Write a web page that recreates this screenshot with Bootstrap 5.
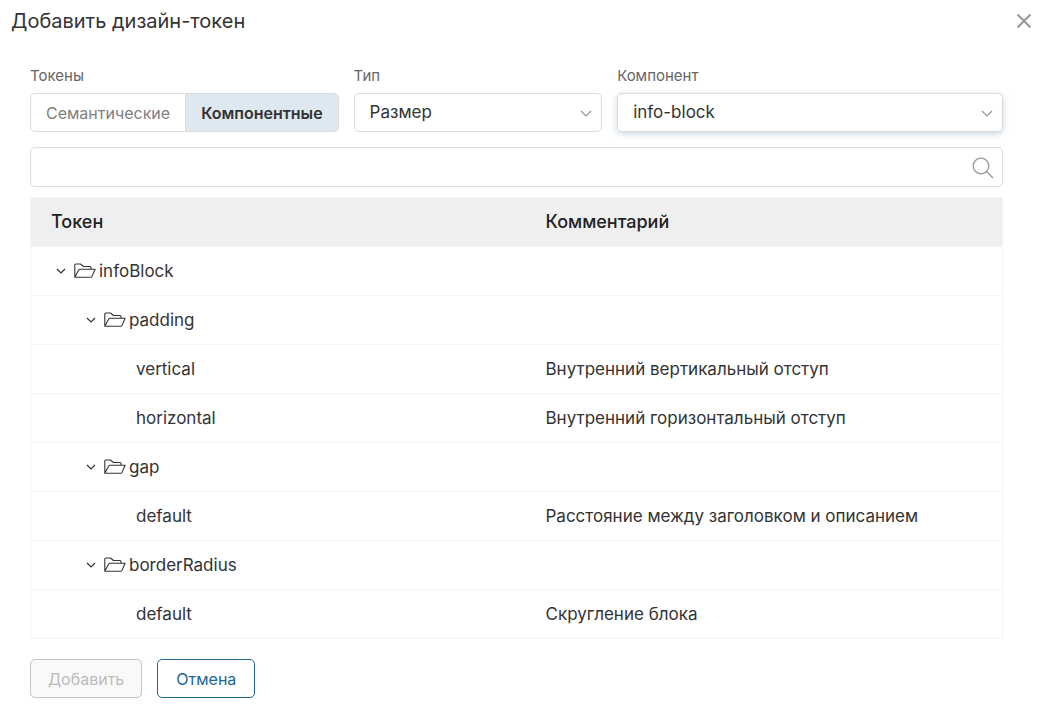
<!DOCTYPE html>
<html lang="ru">
<head>
<meta charset="utf-8">
<meta name="viewport" content="width=device-width, initial-scale=1">
<title>Добавить дизайн-токен</title>
<link href="https://cdn.jsdelivr.net/npm/bootstrap@5.3.0/dist/css/bootstrap.min.css" rel="stylesheet">
<style>
  body { font-family: Inter, "Liberation Sans", sans-serif; font-size: 17px; line-height: 24px; color: #333; background: #fff; }
  .dialog-head { padding: 7px 6px 0 11px; height: 44px; }
  .dialog-title { font-size: 20px; line-height: 28px; font-weight: 400; }
  .close-btn { width: 16px; height: 16px; margin-top: 6px; color: #969696; line-height: 0; }
  .dialog-body { padding: 22px 35px 0 30px; }
  .field-label { font-size: 15px; line-height: 19px; color: #666; margin-bottom: 8px; }
  .filters { gap: 15px; margin-bottom: 15px; }
  .type-field { flex: 248 1 0; min-width: 0; }
  .component-field { flex: 385 1 0; min-width: 0; }
  .form-select, .form-control { height: 39px; font-size: 17px; color: #333; border-color: #dcdcdc; border-radius: 5px; }
  .form-select { padding: 1px 36px 0 15px; background-size: 12px 12px; background-position: right 9px center;
    background-image: url("data:image/svg+xml,%3Csvg xmlns='http://www.w3.org/2000/svg' viewBox='0 0 12 12' fill='none' stroke='%23969696' stroke-width='1.2'%3E%3Cpath d='M1 4l5 5 5-5'/%3E%3C/svg%3E"); }
  .component-field .form-select { box-shadow: 0 2px 6px rgba(32, 103, 150, .25); }
  .seg .btn { height: 39px; padding: 0 15px; font-size: 16px; line-height: 38px; color: #808080; border-color: #dcdcdc; border-radius: 5px; }
  .seg .btn-check:checked + .btn { background: #dee8f0; color: #333; font-weight: 600; border-color: #dcdcdc; }
  .search-box .form-control { height: 40px; padding-right: 40px; }
  .search-icon { top: 10px; right: 9px; color: #969696; line-height: 0; }
  .token-table { margin: 10px 0 20px; border: 1px solid #f4f4f4; color: #333; table-layout: fixed; }
  .token-table th, .token-table td { padding: 12px 20px; border-color: #f4f4f4; height: 49px; color: #333; }
  .token-table th { background: #efefef; font-size: 18px; font-weight: 500; color: #222; }
  .token-table th + th, .token-table td + td { padding-left: 29px; }
  .tree { display: flex; align-items: center; }
  .level-2 { padding-left: 30px; }
  .level-3 { padding-left: 85px; }
  .toggle { width: 20px; height: 24px; line-height: 0; color: #333; }
  .folder { margin: 0 3px; flex: none; }
  .actions { gap: 15px; padding-bottom: 8px; }
  .actions .btn { height: 39px; padding: 0 17px; font-size: 16px; line-height: 38px; border-radius: 5px; }
  .btn-add:disabled { background: #f9f9f9; color: #bcbcbc; border-color: #c4c4c4; opacity: 1; }
  .actions .btn-cancel { padding: 0 18px; color: #206796; border-color: #206796; background: #fff; }
</style>
</head>
<body>
<svg class="d-none" aria-hidden="true">
  <symbol id="chevron" viewBox="0 0 10 10"><path d="M1 3l4 4 4-4" fill="none" stroke="currentColor" stroke-width="1.2"/></symbol>
  <symbol id="folder" viewBox="0 0 22 16"><path d="M.8 14.300V2Q.8 1 1.800 1h4.700l3 2.500h6.500q1 0 1 1v1.500M.8 14.300L4.700 7q.4-.8 1.200-.8h15.200l-3.100 7.200q-.4.900-1.300.9H.8z" fill="none" stroke="currentColor" stroke-width="1.100" stroke-linejoin="round"/></symbol>
</svg>

<header class="dialog-head d-flex justify-content-between align-items-start">
  <h1 class="dialog-title mb-0">Добавить дизайн-токен</h1>
  <button type="button" class="close-btn btn p-0 border-0" aria-label="Закрыть">
    <svg width="16" height="16" viewBox="0 0 16 16" fill="none" stroke="currentColor" stroke-width="2"><path d="M1.500 1.500l13 13M14.500 1.500l-13 13"/></svg>
  </button>
</header>

<main class="dialog-body">
  <div class="filters d-flex">
    <div>
      <div class="field-label" id="tokens-label">Токены</div>
      <div class="seg btn-group" role="group" aria-labelledby="tokens-label">
        <input type="radio" class="btn-check" name="tokens" id="semantic">
        <label class="btn" for="semantic">Семантические</label>
        <input type="radio" class="btn-check" name="tokens" id="component-tokens" checked>
        <label class="btn" for="component-tokens">Компонентные</label>
      </div>
    </div>
    <div class="type-field">
      <label class="field-label d-block" for="type">Тип</label>
      <select class="form-select" id="type"><option>Размер</option></select>
    </div>
    <div class="component-field">
      <label class="field-label d-block" for="component">Компонент</label>
      <select class="form-select" id="component"><option>info-block</option></select>
    </div>
  </div>

  <div class="search-box position-relative">
    <input type="search" class="form-control" aria-label="Поиск">
    <button type="button" class="search-icon btn p-0 border-0 position-absolute" aria-label="Найти">
      <svg width="22" height="22" viewBox="0 0 22 22" fill="none" stroke="currentColor" stroke-width="1.300"><circle cx="9" cy="9" r="7.800"/><path d="M14.500 14.500l6.500 6.500"/></svg>
    </button>
  </div>

  <table class="token-table table">
    <thead><tr><th scope="col">Токен</th><th scope="col">Комментарий</th></tr></thead>
    <tbody>
      <tr><td><div class="tree"><button type="button" class="toggle btn p-0 border-0" aria-label="Свернуть"><svg width="10" height="10"><use href="#chevron"/></svg></button><svg class="folder" width="22" height="16"><use href="#folder"/></svg>infoBlock</div></td><td></td></tr>
      <tr><td><div class="tree level-2"><button type="button" class="toggle btn p-0 border-0" aria-label="Свернуть"><svg width="10" height="10"><use href="#chevron"/></svg></button><svg class="folder" width="22" height="16"><use href="#folder"/></svg>padding</div></td><td></td></tr>
      <tr><td><div class="tree level-3">vertical</div></td><td>Внутренний вертикальный отступ</td></tr>
      <tr><td><div class="tree level-3">horizontal</div></td><td>Внутренний горизонтальный отступ</td></tr>
      <tr><td><div class="tree level-2"><button type="button" class="toggle btn p-0 border-0" aria-label="Свернуть"><svg width="10" height="10"><use href="#chevron"/></svg></button><svg class="folder" width="22" height="16"><use href="#folder"/></svg>gap</div></td><td></td></tr>
      <tr><td><div class="tree level-3">default</div></td><td>Расстояние между заголовком и описанием</td></tr>
      <tr><td><div class="tree level-2"><button type="button" class="toggle btn p-0 border-0" aria-label="Свернуть"><svg width="10" height="10"><use href="#chevron"/></svg></button><svg class="folder" width="22" height="16"><use href="#folder"/></svg>borderRadius</div></td><td></td></tr>
      <tr><td><div class="tree level-3">default</div></td><td>Скругление блока</td></tr>
    </tbody>
  </table>

  <div class="actions d-flex">
    <button type="button" class="btn btn-add" disabled>Добавить</button>
    <button type="button" class="btn btn-cancel">Отмена</button>
  </div>
</main>
<script src="https://cdn.jsdelivr.net/npm/bootstrap@5.3.0/dist/js/bootstrap.bundle.min.js"></script>
</body>
</html>
